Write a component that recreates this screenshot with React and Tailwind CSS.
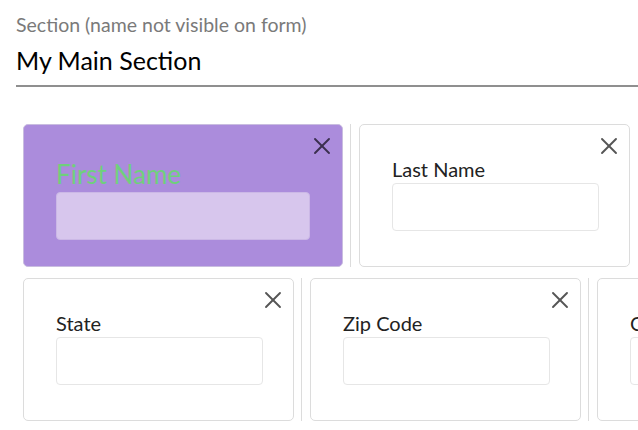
import { X } from "lucide-react";

const FieldCard = ({ label, width = "w-[271px]", active = false }) => {
  return (
    <div
      className={`relative shrink-0 ${width} h-[143px] rounded-[5px] border ${
        active ? "bg-[#ab8cdc] border-[#c9bde0]" : "bg-white border-[#dcdcdc]"
      } pl-[32px] pr-[32px]`}
    >
      <button
        className={`absolute right-[6px] top-[7px] ${active ? "text-[#3b2f4f]" : "text-[#555]"}`}
      >
        <X size={28} strokeWidth={1.6} />
      </button>
      {active ? (
        <div className="pt-[32px]">
          <div className="text-[26px] leading-[35px] text-[#6fd07c]">{label}</div>
          <div className="h-[48px] w-[254px] rounded-[4px] bg-[#d7c6ed] border border-[#cbb8e6]" />
        </div>
      ) : (
        <div className="pt-[30px]">
          <div className="text-[20px] leading-[28px] text-[#222]">{label}</div>
          <div className="h-[48px] w-[207px] rounded-[4px] border border-[#e6e6e6] bg-white" />
        </div>
      )}
    </div>
  );
};

const Divider = () => <div className="shrink-0 w-px self-stretch bg-[#dcdcdc] ml-[7px] mr-[8px]" />;

export default function App() {
  return (
    <div
      className="w-[638px] h-[430px] overflow-hidden bg-white"
      style={{ fontFamily: "Lato, 'Noto Sans', sans-serif" }}
    >
      <div className="pl-[16px] pt-[13px]">
        <div className="text-[19.5px] leading-[24px] text-[#7a7a7a]">Section (name not visible on form)</div>
        <div className="mt-[6px] text-[25px] leading-[34px] text-black">My Main Section</div>
        <div className="mt-[8px] h-[2px] bg-[#8f8f8f]" />
      </div>

      <div className="pl-[23px] pt-[37px] flex flex-col gap-[11px]">
        <div className="flex">
          <FieldCard label="First Name" width="w-[320px]" active />
          <Divider />
          <FieldCard label="Last Name" />
        </div>
        <div className="flex">
          <FieldCard label="State" />
          <Divider />
          <FieldCard label="Zip Code" />
          <Divider />
          <FieldCard label="City" />
        </div>
      </div>
    </div>
  );
}
